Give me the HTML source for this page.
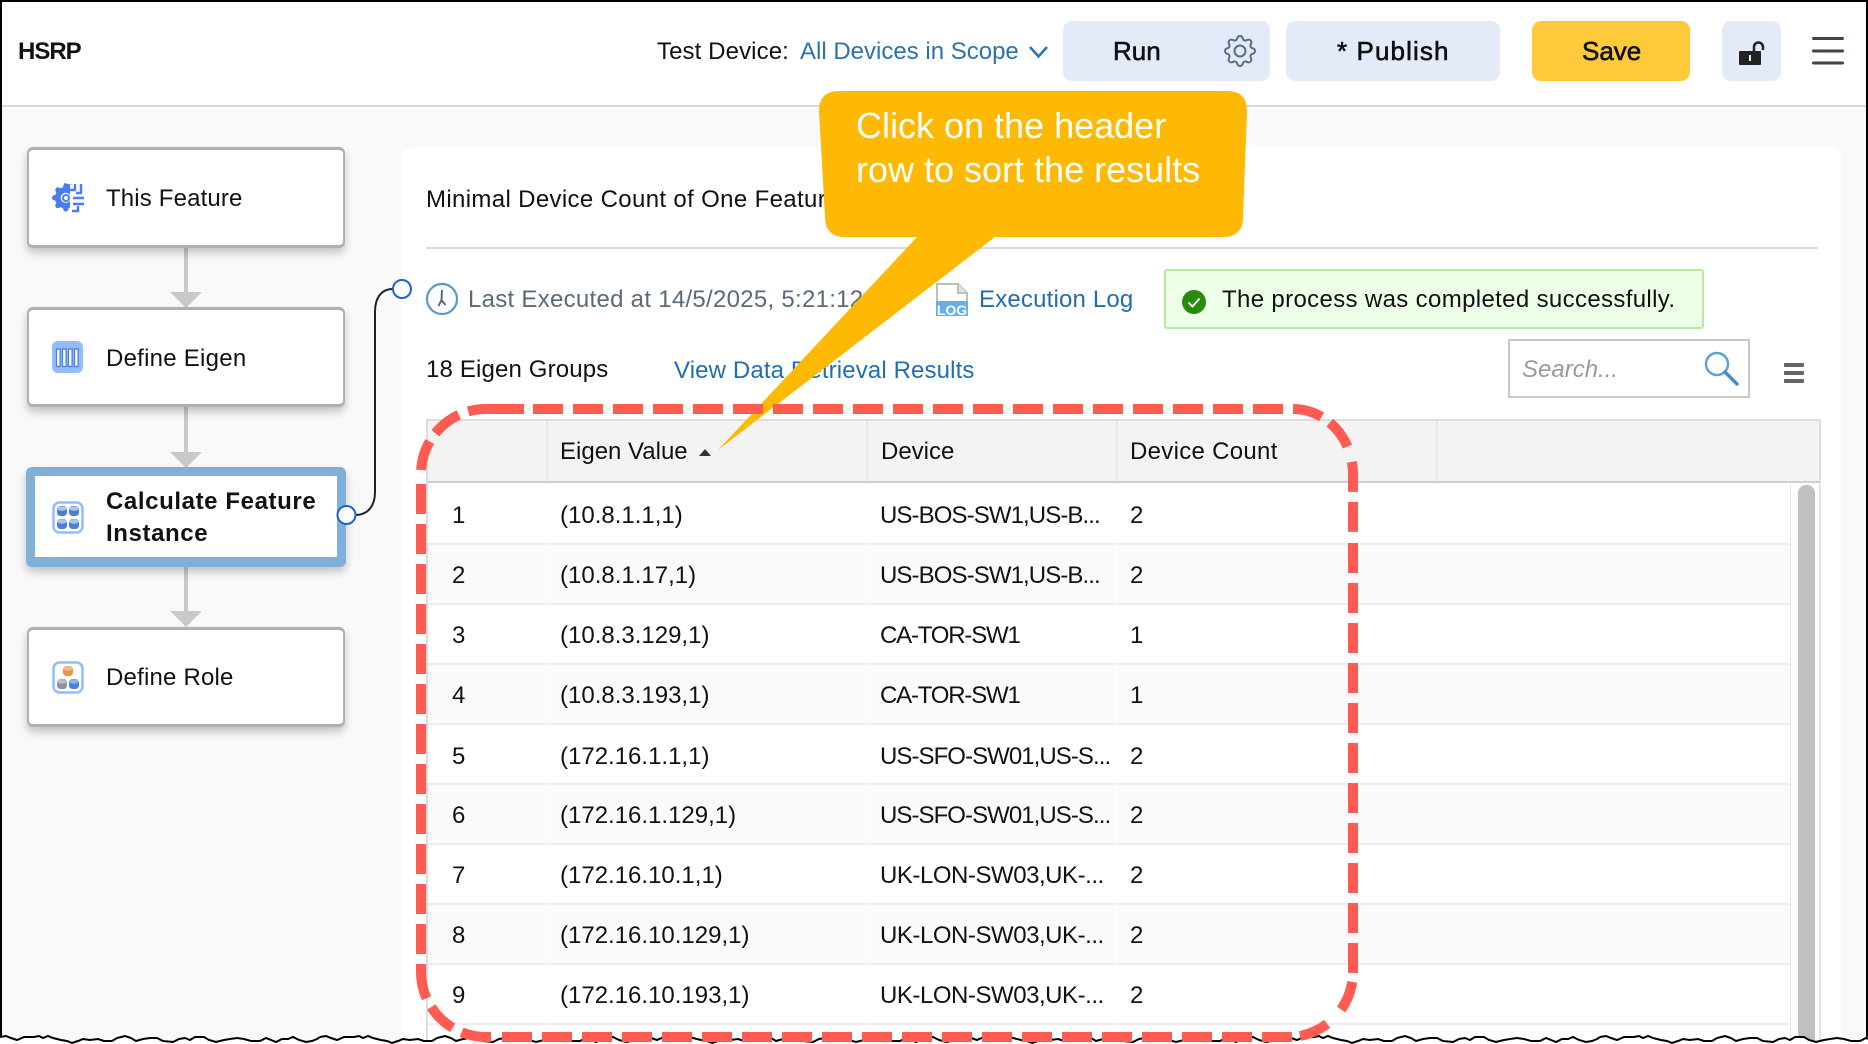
<!DOCTYPE html>
<html lang="en">
<head>
<meta charset="utf-8">
<title>HSRP</title>
<style>
html,body{margin:0;padding:0;background:#fff}
#p{position:relative;width:1868px;height:1044px;overflow:hidden;background:#f9f9f9;font-family:"Liberation Sans",Arial,sans-serif;font-size:24px;color:#111}
.a{position:absolute}
.t{position:absolute;white-space:nowrap;line-height:32px;font-size:24px}
.l{color:#1f6db5}
.card{position:absolute;left:27px;width:318px;box-sizing:border-box;background:#fff;border:2px solid #b0b0b0;border-top-width:3px;border-bottom-width:3px;border-radius:6px;box-shadow:0 5px 9px rgba(0,0,0,.22)}
.btn{position:absolute;top:21px;height:60px;border-radius:9px;background:#e4ebf8}
.bt{position:absolute;white-space:nowrap;font-size:26px;line-height:32px;-webkit-text-stroke:.6px #111;color:#111}
.line{position:absolute;background:#ededed}
.d1{letter-spacing:-.9px}.d2{letter-spacing:-1.190px}.d3{letter-spacing:-.94px}.d4{letter-spacing:-.46px}
svg{position:absolute;overflow:visible}
</style>
</head>
<body>
<div id="p">
  <!-- header -->
  <div class="a" style="left:0;top:0;width:1868px;height:105px;background:#fff"></div>
  <div class="a" style="left:0;top:105px;width:1868px;height:2px;background:#d9d9d9"></div>
  <div class="t" style="left:18px;top:36px;font-weight:bold;letter-spacing:-1px">HSRP</div>
  <div class="t" style="left:657px;top:36px;letter-spacing:.1px">Test Device:</div>
  <div class="t l" style="left:800px;top:36px;color:#2a72b5">All Devices in Scope</div>
  <svg style="left:0;top:0" width="1868" height="110"><path d="M1030 47l8.500 9.500 8.500-9.500" fill="none" stroke="#2a72b5" stroke-width="2.500"/></svg>

  <div class="btn" style="left:1063px;width:207px"></div>
  <div class="bt" style="left:1113px;top:35px">Run</div>
  <svg style="left:1224px;top:35px" width="32" height="32" viewBox="0 0 16 16" fill="#5c6e7e">
    <path d="M8 4.754a3.246 3.246 0 1 0 0 6.492 3.246 3.246 0 0 0 0-6.492zM5.754 8a2.246 2.246 0 1 1 4.492 0 2.246 2.246 0 0 1-4.492 0z"/>
    <path d="M9.796 1.343c-.527-1.790-3.065-1.790-3.592 0l-.094.319a.873.873 0 0 1-1.255.52l-.292-.16c-1.640-.892-3.433.902-2.540 2.541l.159.292a.873.873 0 0 1-.52 1.255l-.319.094c-1.790.527-1.790 3.065 0 3.592l.319.094a.873.873 0 0 1 .52 1.255l-.16.292c-.892 1.640.901 3.434 2.541 2.540l.292-.159a.873.873 0 0 1 1.255.52l.094.319c.527 1.790 3.065 1.790 3.592 0l.094-.319a.873.873 0 0 1 1.255-.52l.292.16c1.640.893 3.434-.902 2.540-2.541l-.159-.292a.873.873 0 0 1 .52-1.255l.319-.094c1.790-.527 1.790-3.065 0-3.592l-.319-.094a.873.873 0 0 1-.52-1.255l.16-.292c.893-1.640-.902-3.433-2.541-2.540l-.292.159a.873.873 0 0 1-1.255-.52l-.094-.319zm-2.633.283c.246-.835 1.428-.835 1.674 0l.094.319a1.873 1.873 0 0 0 2.693 1.115l.291-.16c.764-.415 1.600.42 1.184 1.185l-.159.292a1.873 1.873 0 0 0 1.116 2.692l.318.094c.835.246.835 1.428 0 1.674l-.319.094a1.873 1.873 0 0 0-1.115 2.693l.16.291c.415.764-.42 1.600-1.185 1.184l-.291-.159a1.873 1.873 0 0 0-2.693 1.116l-.094.318c-.246.835-1.428.835-1.674 0l-.094-.319a1.873 1.873 0 0 0-2.692-1.115l-.292.16c-.764.415-1.600-.42-1.184-1.185l.159-.291A1.873 1.873 0 0 0 1.945 8.930l-.319-.094c-.835-.246-.835-1.428 0-1.674l.319-.094A1.873 1.873 0 0 0 3.060 4.377l-.16-.292c-.415-.764.42-1.600 1.185-1.184l.292.159a1.873 1.873 0 0 0 2.692-1.115l.094-.319z"/>
  </svg>
  <div class="btn" style="left:1286px;width:214px"></div>
  <div class="bt" style="left:1337px;top:35px;letter-spacing:1.100px">* Publish</div>
  <div class="btn" style="left:1532px;width:158px;background:#ffc93c"></div>
  <div class="bt" style="left:1582px;top:35px">Save</div>
  <div class="btn" style="left:1722px;width:59px"></div>
  <svg style="left:0;top:0" width="1868" height="110">
    <path d="M1740 51h20a1 1 0 0 1 1 1v12a1 1 0 0 1-1 1h-20a1 1 0 0 1-1-1v-12a1 1 0 0 1 1-1z" fill="#222"/>
    <path d="M1754 51v-4a4.500 4.500 0 0 1 9 0v3" fill="none" stroke="#222" stroke-width="2.500"/>
    <rect x="1749" y="55" width="2" height="6" fill="#e4ebf8"/>
    <rect x="1812" y="37" width="32" height="3" rx="1.500" fill="#3f444a"/>
    <rect x="1812" y="49.500" width="32" height="3" rx="1.500" fill="#3f444a"/>
    <rect x="1812" y="61.500" width="32" height="3" rx="1.500" fill="#3f444a"/>
  </svg>

  <!-- connectors -->
  <svg style="left:0;top:0" width="420" height="700">
    <g fill="#c9c9c9">
      <rect x="184" y="246" width="4" height="50"/><path d="M170 292h32l-16 16z"/>
      <rect x="184" y="406" width="4" height="50"/><path d="M170 452h32l-16 16z"/>
      <rect x="184" y="567" width="4" height="48"/><path d="M170 611h32l-16 16z"/>
    </g>
  </svg>

  <!-- cards -->
  <div class="card" style="top:147px;height:101px"></div>
  <div class="t" style="left:106px;top:183px;letter-spacing:.15px">This Feature</div>
  <div class="card" style="top:307px;height:100px"></div>
  <div class="t" style="left:106px;top:343px;letter-spacing:.25px">Define Eigen</div>
  <div class="card" style="top:467px;left:26px;width:320px;height:100px;border:9px solid #7eb0d9;border-bottom-width:10px"></div>
  <div class="t" style="left:106px;top:486px;font-weight:bold;letter-spacing:.6px">Calculate Feature</div>
  <div class="t" style="left:106px;top:518px;font-weight:bold;letter-spacing:.6px">Instance</div>
  <div class="card" style="top:627px;height:100px"></div>
  <div class="t" style="left:106px;top:662px;letter-spacing:.2px">Define Role</div>

  <!-- card icons -->
  <svg style="left:0;top:0" width="120" height="720">
    <g transform="translate(52,184) scale(1.720)" fill="#4a7ef0">
      <path d="M9.405 1.050c-.413-1.400-2.397-1.400-2.810 0l-.1.34a1.464 1.464 0 0 1-2.105.872l-.31-.17c-1.283-.698-2.686.705-1.987 1.987l.169.311c.446.82.023 1.841-.872 2.105l-.34.1c-1.400.413-1.400 2.397 0 2.810l.34.1a1.464 1.464 0 0 1 .872 2.105l-.17.31c-.698 1.283.705 2.686 1.987 1.987l.311-.169a1.464 1.464 0 0 1 2.105.872l.1.34c.413 1.400 2.397 1.400 2.810 0l.1-.34a1.464 1.464 0 0 1 2.105-.872l.31.17c1.283.698 2.686-.705 1.987-1.987l-.169-.311a1.464 1.464 0 0 1 .872-2.105l.34-.1c1.400-.413 1.400-2.397 0-2.810l-.34-.1a1.464 1.464 0 0 1-.872-2.105l.17-.31c.698-1.283-.705-2.686-1.987-1.987l-.311.169a1.464 1.464 0 0 1-2.105-.872l-.1-.34zM8 10.930a2.929 2.929 0 1 1 0-5.860 2.929 2.929 0 0 1 0 5.858z"/>
    </g>
    <rect x="70" y="181" width="18" height="33" fill="#fff"/>
    <path d="M64 183v6h6v-4h3M70 186" fill="#4a7ef0"/>
    <circle cx="66" cy="198" r="3" fill="none" stroke="#4a7ef0" stroke-width="2"/>
    <path d="M75 184v6h-5M81 184v9h-5M73 198h11M73 204h11M72 211h6v-5" fill="none" stroke="#4a7ef0" stroke-width="2.400"/>

    <rect x="52" y="341" width="31" height="32" rx="6" fill="#93bbff"/>
    <g fill="#fff" stroke="#4a7fe0" stroke-width="1.300">
      <rect x="56.500" y="349" width="3.600" height="17.500"/><rect x="62.500" y="349" width="3.600" height="17.500"/><rect x="68.500" y="349" width="3.600" height="17.500"/><rect x="74.500" y="349" width="3.600" height="17.500"/>
    </g>

    <rect x="53.500" y="502.500" width="29" height="30" rx="6" fill="#fff" stroke="#93bbff" stroke-width="2.500"/>
    <g fill="#4c7fd8">
      <rect x="57" y="506" width="10" height="10" rx="3.500"/><rect x="69" y="506" width="10" height="10" rx="3.500"/>
      <rect x="57" y="519" width="10" height="10" rx="3.500"/><rect x="69" y="519" width="10" height="10" rx="3.500"/>
    </g>
    <g fill="#a9c6f2">
      <ellipse cx="62" cy="508.500" rx="5" ry="2.200"/><ellipse cx="74" cy="508.500" rx="5" ry="2.200"/>
      <ellipse cx="62" cy="521.500" rx="5" ry="2.200"/><ellipse cx="74" cy="521.500" rx="5" ry="2.200"/>
    </g>

    <rect x="53.500" y="662.500" width="29" height="30" rx="6" fill="#fff" stroke="#93bbff" stroke-width="2.500"/>
    <rect x="63" y="666" width="10" height="10" rx="3.500" fill="#e8954f"/><ellipse cx="68" cy="668.500" rx="5" ry="2.200" fill="#f2bb8a"/>
    <rect x="57" y="679" width="10" height="10" rx="3.500" fill="#8d949b"/><ellipse cx="62" cy="681.500" rx="5" ry="2.200" fill="#b9bec3"/>
    <rect x="69" y="679" width="10" height="10" rx="3.500" fill="#4c7fd8"/><ellipse cx="74" cy="681.500" rx="5" ry="2.200" fill="#8fb3ec"/>
  </svg>

  <!-- panel -->
  <div class="a" style="left:402px;top:147px;width:1440px;height:900px;background:#fff;border-radius:12px 12px 0 0"></div>

  <div class="t" style="left:426px;top:184px;letter-spacing:.35px">Minimal Device Count of One Feature</div>
  <div class="a" style="left:426px;top:247px;width:1392px;height:2px;background:#d9d9d9"></div>

  <svg style="left:425px;top:282px" width="34" height="34">
    <circle cx="17" cy="17" r="15" fill="#fff" stroke="#5a9ac0" stroke-width="2.200"/>
    <path d="M17 8l-.5 10-3 6M16.500 18l4 5" fill="none" stroke="#4f6678" stroke-width="1.900"/>
  </svg>
  <div class="t" style="left:468px;top:284px;color:#5a6a78;letter-spacing:.28px">Last Executed at 14/5/2025, 5:21:12 PM</div>

  <svg style="left:936px;top:283px" width="32" height="33">
    <path d="M1 1h21l9 9v14H1z" fill="#fff" stroke="#bdbdbd" stroke-width="2"/>
    <path d="M22 1v9h9" fill="#e3e3e3" stroke="#bdbdbd" stroke-width="2"/>
    <rect x="0" y="18" width="32" height="15" fill="#64b0ee"/>
    <text x="16" y="32" text-anchor="middle" font-family="Liberation Sans, sans-serif" font-size="14" font-weight="bold" fill="#fff">LOG</text>
  </svg>
  <div class="t l" style="left:979px;top:284px;letter-spacing:.18px">Execution Log</div>

  <div class="a" style="left:1164px;top:269px;width:540px;height:60px;box-sizing:border-box;background:#eeffe8;border:2px solid #b8e9a3;border-radius:3px"></div>
  <svg style="left:1181px;top:289px" width="26" height="26">
    <circle cx="13" cy="13" r="12" fill="#2a8a0e"/>
    <path d="M7.500 13.500l4 4 7-8" fill="none" stroke="#fff" stroke-width="1.800"/>
  </svg>
  <div class="t" style="left:1222px;top:284px;letter-spacing:.35px">The process was completed successfully.</div>

  <div class="t" style="left:426px;top:354px;letter-spacing:.15px">18 Eigen Groups</div>
  <div class="t l" style="left:674px;top:355px;letter-spacing:.13px">View Data Retrieval Results</div>

  <div class="a" style="left:1508px;top:339px;width:242px;height:59px;box-sizing:border-box;border:2px solid #c8c8c8;background:#fff"></div>
  <div class="t" style="left:1522px;top:354px;color:#9a9a9a;font-style:italic">Search...</div>
  <svg style="left:1700px;top:348px" width="42" height="40">
    <circle cx="17" cy="16" r="11" fill="none" stroke="#5aa0d0" stroke-width="2.400"/>
    <path d="M25 24l12 12" stroke="#3f8fc6" stroke-width="3.500" stroke-linecap="round"/>
  </svg>
  <svg style="left:1784px;top:362px" width="20" height="22" fill="#636363">
    <rect y="1" width="20" height="4" rx="1"/><rect y="9" width="20" height="4" rx="1"/><rect y="17" width="20" height="4" rx="1"/>
  </svg>

  <!-- table -->
  <div class="a" style="left:426px;top:419px;width:1395px;height:64px;box-sizing:border-box;background:#f3f3f3;border:2px solid #ddd;border-bottom-color:#cfcfcf"></div>
  <div class="a" style="left:546px;top:421px;width:2px;height:60px;background:#e8e8e8"></div>
  <div class="a" style="left:866px;top:421px;width:2px;height:60px;background:#e8e8e8"></div>
  <div class="a" style="left:1116px;top:421px;width:2px;height:60px;background:#e8e8e8"></div>
  <div class="a" style="left:1436px;top:421px;width:2px;height:60px;background:#e8e8e8"></div>
  <div class="t" style="left:560px;top:436px">Eigen Value</div>
  <svg style="left:699px;top:449px" width="12" height="8"><path d="M0 7h12L6 0z" fill="#333"/></svg>
  <div class="t" style="left:881px;top:436px">Device</div>
  <div class="t" style="left:1130px;top:436px;letter-spacing:.3px">Device Count</div>

  <div class="a" style="left:426px;top:483px;width:2px;height:561px;background:#ddd"></div>
  <div class="a" style="left:1819px;top:483px;width:2px;height:561px;background:#e4e4e4"></div>
  <div class="a" style="left:1790px;top:483px;width:1px;height:561px;background:#e9e9e9"></div>
  <div class="a" style="left:1798px;top:485px;width:17px;height:559px;background:#c0c0c0;border-radius:8px 8px 0 0"></div>

  <div class="a" style="left:428px;top:545px;width:1362px;height:59px;background:#fafafa"></div>
  <div class="a" style="left:428px;top:665px;width:1362px;height:59px;background:#fafafa"></div>
  <div class="a" style="left:428px;top:785px;width:1362px;height:59px;background:#fafafa"></div>
  <div class="a" style="left:428px;top:905px;width:1362px;height:59px;background:#fafafa"></div>

  <div class="line" style="left:428px;top:543px;width:1362px;height:2px"></div>
  <div class="line" style="left:428px;top:603px;width:1362px;height:2px"></div>
  <div class="line" style="left:428px;top:663px;width:1362px;height:2px"></div>
  <div class="line" style="left:428px;top:723px;width:1362px;height:2px"></div>
  <div class="line" style="left:428px;top:783px;width:1362px;height:2px"></div>
  <div class="line" style="left:428px;top:843px;width:1362px;height:2px"></div>
  <div class="line" style="left:428px;top:903px;width:1362px;height:2px"></div>
  <div class="line" style="left:428px;top:963px;width:1362px;height:2px"></div>
  <div class="line" style="left:428px;top:1023px;width:1362px;height:2px"></div>
  <div class="a" style="left:546px;top:483px;width:1px;height:561px;background:#fff"></div>
  <div class="a" style="left:866px;top:483px;width:1px;height:561px;background:#fff"></div>
  <div class="a" style="left:1116px;top:483px;width:1px;height:561px;background:#fff"></div>

  <div class="t" style="left:452px;top:500px">1</div><div class="t" style="left:560px;top:500px">(10.8.1.1,1)</div><div class="t d1" style="left:880px;top:500px">US-BOS-SW1,US-B...</div><div class="t" style="left:1130px;top:500px">2</div>
  <div class="t" style="left:452px;top:560px">2</div><div class="t" style="left:560px;top:560px">(10.8.1.17,1)</div><div class="t d1" style="left:880px;top:560px">US-BOS-SW1,US-B...</div><div class="t" style="left:1130px;top:560px">2</div>
  <div class="t" style="left:452px;top:620px">3</div><div class="t" style="left:560px;top:620px">(10.8.3.129,1)</div><div class="t d2" style="left:880px;top:620px">CA-TOR-SW1</div><div class="t" style="left:1130px;top:620px">1</div>
  <div class="t" style="left:452px;top:680px">4</div><div class="t" style="left:560px;top:680px">(10.8.3.193,1)</div><div class="t d2" style="left:880px;top:680px">CA-TOR-SW1</div><div class="t" style="left:1130px;top:680px">1</div>
  <div class="t" style="left:452px;top:741px">5</div><div class="t" style="left:560px;top:741px">(172.16.1.1,1)</div><div class="t d3" style="left:880px;top:741px">US-SFO-SW01,US-S...</div><div class="t" style="left:1130px;top:741px">2</div>
  <div class="t" style="left:452px;top:800px">6</div><div class="t" style="left:560px;top:800px">(172.16.1.129,1)</div><div class="t d3" style="left:880px;top:800px">US-SFO-SW01,US-S...</div><div class="t" style="left:1130px;top:800px">2</div>
  <div class="t" style="left:452px;top:860px">7</div><div class="t" style="left:560px;top:860px">(172.16.10.1,1)</div><div class="t d4" style="left:880px;top:860px">UK-LON-SW03,UK-...</div><div class="t" style="left:1130px;top:860px">2</div>
  <div class="t" style="left:452px;top:920px">8</div><div class="t" style="left:560px;top:920px">(172.16.10.129,1)</div><div class="t d4" style="left:880px;top:920px">UK-LON-SW03,UK-...</div><div class="t" style="left:1130px;top:920px">2</div>
  <div class="t" style="left:452px;top:980px">9</div><div class="t" style="left:560px;top:980px">(172.16.10.193,1)</div><div class="t d4" style="left:880px;top:980px">UK-LON-SW03,UK-...</div><div class="t" style="left:1130px;top:980px">2</div>

  <!-- link line -->
  <svg style="left:0;top:0" width="1868" height="1044">
    <path d="M393 289C381 289 375 298 375 312V492C375 506 368 515 355 515" fill="none" stroke="#222" stroke-width="2"/>
    <circle cx="402" cy="289" r="9" fill="#fff" stroke="#1f5fd9" stroke-width="2"/>
    <circle cx="346.500" cy="515" r="9" fill="#fff" stroke="#1f5fd9" stroke-width="2"/>
  </svg>

  <!-- frame + torn edge -->
  <svg style="left:0;top:0" width="1868" height="1044">
    <defs>
      <path id="wf" d="M0 1037l6-1 5 2 6 2 7-3 10 0 5-1 4 2 5-2 5 2 8 2 6 1 5 2 6-2 5-2 7 1 8-1 6 2 8 0 5-3 8-2 6 2 5 3 7-2 7-1 7 0 6 3 10 1 6-3 6-1 5 2 5-3 9 0 5 3 7 2 8-2 6-1 7-1 7 1 7 2 9 0 6-3 5 2 5 2 6-3 6 0 5-2 6 3 7 2 6-1 5-2 L320 1037V1050H0Z"/>
      <path id="ws" d="M0 1037l6-1 5 2 6 2 7-3 10 0 5-1 4 2 5-2 5 2 8 2 6 1 5 2 6-2 5-2 7 1 8-1 6 2 8 0 5-3 8-2 6 2 5 3 7-2 7-1 7 0 6 3 10 1 6-3 6-1 5 2 5-3 9 0 5 3 7 2 8-2 6-1 7-1 7 1 7 2 9 0 6-3 5 2 5 2 6-3 6 0 5-2 6 3 7 2 6-1 5-2 L320 1037"/>
    </defs>
    <g fill="#fff">
      <use href="#wf"/><use href="#wf" x="320"/><use href="#wf" x="640"/><use href="#wf" x="960"/><use href="#wf" x="1280"/><use href="#wf" x="1600"/>
    </g>
    <rect x="0" y="0" width="2" height="1037" fill="#000"/>
    <rect x="1866" y="0" width="2" height="1037" fill="#000"/>
    <rect x="0" y="0" width="1868" height="2" fill="#000"/>
    <g fill="none" stroke="#000" stroke-width="2">
      <use href="#ws"/><use href="#ws" x="320"/><use href="#ws" x="640"/><use href="#ws" x="960"/><use href="#ws" x="1280"/><use href="#ws" x="1600"/>
    </g>
  </svg>

  <!-- callout -->
  <svg style="left:0;top:0" width="1868" height="1044">
    <path d="M839 91H1227Q1247 91 1247 111L1243 217Q1243 237 1223 237H995L718 450L917 237H845Q825 237 825 217L819 111Q819 91 839 91Z" fill="#fdb903"/>
  </svg>
  <div class="a" style="left:856px;top:104px;font-size:36px;line-height:44px;color:#fff;white-space:nowrap">Click on the header<br>row to sort the results</div>

  <!-- dashed highlight -->
  <svg style="left:-1px;top:0" width="1868" height="1044" fill="none" stroke="#ff5b50" stroke-width="10">
    <path d="M534 409H1294" stroke-dasharray="30 10"/>
    <path d="M1294 409A60 65 0 0 1 1354 474V533" stroke-dasharray="30 10 30 16 30 10 30"/>
    <path d="M1354 543V943" stroke-dasharray="30 10"/>
    <path d="M1354 943V972A65 65 0 0 1 1289 1037H1263" stroke-dasharray="30 9 30 20 30 8 30"/>
    <path d="M1253 1037H503" stroke-dasharray="30 10"/>
    <path d="M492 1037H487A65 65 0 0 1 422 972V964" stroke-dasharray="30 10 30 10 35"/>
    <path d="M422 954V484" stroke-dasharray="30 10"/>
    <path d="M525 409H487A65 65 0 0 0 422 474" stroke-dasharray="56 10 30 10 30"/>
  </svg>
</div>
</body>
</html>
